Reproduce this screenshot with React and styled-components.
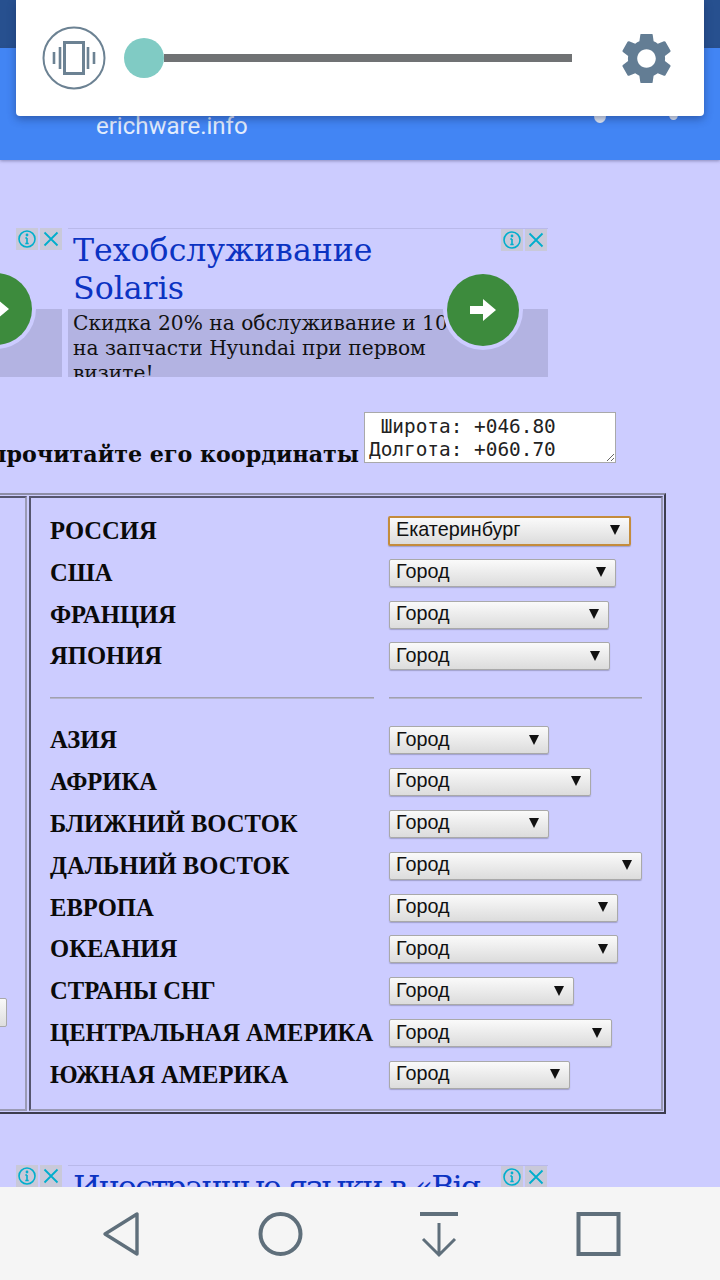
import React from "react";
import styled, { createGlobalStyle } from "styled-components";

const Global = createGlobalStyle`
  html, body { margin: 0; padding: 0; background: #ccccff; }
  * { box-sizing: border-box; }
`;

const Page = styled.div`
  position: relative;
  width: 720px;
  height: 1280px;
  overflow: hidden;
  background: #ccccff;
  font-family: "Liberation Serif", serif;
`;

const StatusBar = styled.div`
  height: 48px;
  background: #27508f;
`;

const AppBar = styled.header`
  position: relative;
  height: 112px;
  padding: 65px 0 0 96px;
  background: #4285f4;
  box-shadow: 0 1px 3px rgba(60, 60, 100, 0.45);
`;

const SiteName = styled.div`
  font: 24px/26px Roboto, sans-serif;
  color: #e3edfd;
`;

const Dot = styled.span`
  position: absolute;
  left: ${(p) => p.$x}px;
  top: ${(p) => p.$y}px;
  width: ${(p) => p.$s}px;
  height: ${(p) => p.$s + 2}px;
  border-radius: 50%;
  background: #e8edf6;
`;

const QuickPanel = styled.div`
  position: absolute;
  left: 16px;
  top: 0;
  width: 688px;
  height: 116px;
  display: flex;
  align-items: center;
  padding: 0 26px;
  background: #fff;
  border-radius: 0 0 4px 4px;
  box-shadow: 0 3px 8px rgba(20, 40, 90, 0.45);
`;

const VibrateIcon = styled.svg`
  width: 64px;
  height: 64px;
  flex: none;
`;

const Slider = styled.div`
  display: flex;
  align-items: center;
  margin-left: 18px;
  width: 448px;
  flex: none;
`;

const Knob = styled.div`
  width: 40px;
  height: 40px;
  border-radius: 50%;
  background: #80cbc4;
  flex: none;
`;

const Track = styled.div`
  flex: 1;
  height: 8px;
  background: #707274;
`;

const GearIcon = styled.svg`
  width: 49px;
  height: 49px;
  margin-left: 50px;
  flex: none;
`;

const AdRow = styled.section`
  display: flex;
  gap: 6px;
  height: ${(p) => p.$h}px;
  margin-top: ${(p) => p.$top}px;
  overflow: hidden;
`;

const AdStub = styled.div`
  position: relative;
  width: 62px;
  flex: none;
  display: flex;
  flex-direction: column;
  justify-content: flex-end;
  overflow: hidden;
`;

const Ad = styled.div`
  position: relative;
  width: 480px;
  flex: none;
  border-top: 1px solid #b9b9ea;
  display: flex;
  flex-direction: column;
`;

const AdTitle = styled.div`
  height: 80px;
  flex: none;
  padding: 2px 0 0 5px;
  font-family: "DejaVu Serif", serif;
  font-size: 31.6px;
  line-height: 38px;
  letter-spacing: ${(p) => p.$spacing || 0}px;
  color: #0b33c2;
  white-space: nowrap;
`;

const AdBody = styled.div`
  height: 68px;
  flex: none;
  overflow: hidden;
  padding: 2px 0 0 5px;
  background: #b3b3e2;
  font-family: "DejaVu Serif", serif;
  font-size: 20.2px;
  line-height: 25px;
  color: #111;
  white-space: nowrap;
`;

const StubShade = styled.div`
  height: 68px;
  background: #b3b3e2;
`;

const AdButtons = styled.div`
  position: absolute;
  right: ${(p) => p.$r}px;
  top: 0;
  display: flex;
  gap: 2px;
`;

const AdButton = styled.div`
  width: 22px;
  height: 22px;
  background: #c9c9d9;
  display: flex;
  align-items: center;
  justify-content: center;
`;

const GoButton = styled.div`
  position: absolute;
  left: ${(p) => p.$x - 40}px;
  top: ${(p) => p.$y - 40}px;
  width: 80px;
  height: 80px;
  border-radius: 50%;
  background: #ccccff;
  display: flex;
  align-items: center;
  justify-content: center;
`;

const GoInner = styled.div`
  width: 72px;
  height: 72px;
  border-radius: 50%;
  background: #3d8b3d;
  display: flex;
  align-items: center;
  justify-content: center;
`;

const CoordRow = styled.section`
  display: flex;
  justify-content: flex-end;
  align-items: flex-end;
  gap: 5px;
  margin-top: 35px;
  padding-right: 104px;
  height: 51px;
`;

const CoordLabel = styled.div`
  font-family: "DejaVu Serif", serif;
  font-size: 22.2px;
  font-weight: bold;
  line-height: 30px;
  color: #0a0a0a;
  white-space: nowrap;
  margin-bottom: -6px;
`;

const CoordBox = styled.textarea`
  width: 252px;
  height: 51px;
  flex: none;
  margin: 0;
  padding: 2px 4px 0;
  border: 1px solid #a9a9a9;
  border-radius: 0;
  background: #fff;
  font: 19.4px/23px "DejaVu Sans Mono", monospace;
  color: #222;
  white-space: pre;
  overflow: hidden;
  resize: both;
  outline: none;
`;

const Table = styled.section`
  display: flex;
  gap: 2px;
  width: 766px;
  height: 621px;
  margin: 30px 0 0 -100px;
  padding: 1px 1px 1px 0;
  border-top: 2px solid #8d8da6;
  border-right: 2px solid #3d3d4e;
  border-bottom: 2px solid #3d3d4e;
`;

const SideCell = styled.div`
  flex: 1;
  padding-top: 500px;
  border: 2px solid;
  border-color: #55556e #9a9ab4 #9a9ab4 #55556e;
`;

const SideStub = styled.div`
  width: 105px;
  height: 29px;
  border: 1px solid #a9a9a9;
  border-radius: 2px;
  background: linear-gradient(#f9f9f9, #dedede);
`;

const MainCell = styled.div`
  width: 634px;
  flex: none;
  padding: 12px 0 0 19px;
  border: 2px solid;
  border-color: #55556e #9a9ab4 #9a9ab4 #55556e;
  display: grid;
  grid-template-columns: 339px 1fr;
  grid-auto-rows: 41.85px;
  align-items: center;
  align-content: start;
`;

const Label = styled.div`
  font-size: 24.6px;
  font-weight: bold;
  line-height: 30px;
  color: #0a0a0a;
  white-space: nowrap;
`;

const Select = styled.div`
  width: ${(p) => p.$w}px;
  height: ${(p) => (p.$focus ? 30 : 28)}px;
  margin-left: ${(p) => (p.$focus ? -1 : 0)}px;
  display: flex;
  align-items: center;
  justify-content: space-between;
  padding: 0 9px 3px 6px;
  border: ${(p) => (p.$focus ? "2px solid #c48c3c" : "1px solid #a9a9a9")};
  border-radius: 2px;
  background: linear-gradient(#fafafa, #dcdcdc);
  box-shadow: 0 1px 1px rgba(80, 80, 110, 0.35);
  font: 19.8px/24px "Liberation Sans", sans-serif;
  color: #111;
`;

const Arrow = styled.span`
  width: 0;
  height: 0;
  border-left: 5px solid transparent;
  border-right: 5px solid transparent;
  border-top: 10px solid #111;
  margin-top: 2px;
`;

const Rule = styled.div`
  height: 2px;
  border-top: 1px solid #a0a0ae;
  border-bottom: 1px solid #b4b4cc;
  width: ${(p) => p.$w}px;
`;

const NavBar = styled.nav`
  position: absolute;
  left: 0;
  bottom: 0;
  width: 720px;
  height: 93px;
  display: flex;
  justify-content: center;
  padding-top: 23px;
  background: #f5f5f5;
`;

const NavItem = styled.div`
  width: 159px;
  height: 50px;
  display: flex;
  justify-content: center;
`;

const NavIcon = styled.svg`
  width: 50px;
  height: 50px;
  fill: none;
  stroke: #5f6f7b;
  stroke-width: 4;
`;

const InfoGlyph = () => (
  <svg width="20" height="20" viewBox="0 0 20 20" fill="none" stroke="#00aecd" strokeWidth="1.6">
    <circle cx="10" cy="10" r="8" />
    <path d="M10 9v5.5M8.3 9h1.7M8.3 14.5h3.4" />
    <circle cx="10" cy="6" r="0.6" fill="#00aecd" />
  </svg>
);
const CloseGlyph = () => (
  <svg width="20" height="20" viewBox="0 0 20 20" fill="none" stroke="#00aecd" strokeWidth="1.8">
    <path d="M3.5 3.5l13 13M16.5 3.5l-13 13" />
  </svg>
);
const Buttons = ({ r }) => (
  <AdButtons $r={r}>
    <AdButton><InfoGlyph /></AdButton>
    <AdButton><CloseGlyph /></AdButton>
  </AdButtons>
);
const Go = ({ x, y }) => (
  <GoButton $x={x} $y={y}>
    <GoInner>
      <svg width="28" height="24" viewBox="0 0 28 24" fill="#fff">
        <path d="M1 8h13V1l13 11-13 11v-7H1z" />
      </svg>
    </GoInner>
  </GoButton>
);

const TOP = [
  ["РОССИЯ", 243, "Екатеринбург", true],
  ["США", 227],
  ["ФРАНЦИЯ", 220],
  ["ЯПОНИЯ", 221],
];
const BOTTOM = [
  ["АЗИЯ", 160],
  ["АФРИКА", 202],
  ["БЛИЖНИЙ ВОСТОК", 160],
  ["ДАЛЬНИЙ ВОСТОК", 253],
  ["ЕВРОПА", 229],
  ["ОКЕАНИЯ", 229],
  ["СТРАНЫ СНГ", 185],
  ["ЦЕНТРАЛЬНАЯ АМЕРИКА", 223],
  ["ЮЖНАЯ АМЕРИКА", 181],
];

const Row = ({ item }) => (
  <>
    <Label>{item[0]}</Label>
    <Select $w={item[1]} $focus={item[3]}>
      {item[2] || "Город"}
      <Arrow />
    </Select>
  </>
);

export default function App() {
  return (
    <Page>
      <Global />
      <StatusBar />
      <AppBar>
        <SiteName>erichware.info</SiteName>
        <Dot $x={34} $y={60} $s={5} />
        <Dot $x={56} $y={60} $s={5} />
        <Dot $x={594} $y={61} $s={12} />
        <Dot $x={669} $y={61} $s={9} />
      </AppBar>
      <QuickPanel>
        <VibrateIcon viewBox="0 0 64 64" fill="none" stroke="#6c8293">
          <circle cx="32" cy="32" r="30.5" strokeWidth="2" />
          <rect x="22.5" y="16.5" width="19" height="31" strokeWidth="3" />
          <path d="M18 21v22M46 21v22" strokeWidth="2.6" />
          <path d="M12 26v12M52 26v12" strokeWidth="2.6" />
        </VibrateIcon>
        <Slider>
          <Knob />
          <Track />
        </Slider>
        <GearIcon viewBox="2.5 2.5 19 19" fill="#637d94">
          <path d="M19.14 12.94c.04-.3.06-.61.06-.94 0-.32-.02-.64-.07-.94l2.03-1.58c.18-.14.23-.41.12-.61l-1.92-3.32c-.12-.22-.37-.29-.59-.22l-2.39.96c-.5-.38-1.03-.7-1.62-.94l-.36-2.54c-.04-.24-.24-.41-.48-.41h-3.84c-.24 0-.43.17-.47.41l-.36 2.54c-.59.24-1.13.57-1.62.94l-2.39-.96c-.22-.08-.47 0-.59.22L2.74 8.87c-.12.21-.08.47.12.61l2.03 1.58c-.05.3-.09.63-.09.94s.02.64.07.94l-2.03 1.58c-.18.14-.23.41-.12.61l1.92 3.32c.12.22.37.29.59.22l2.39-.96c.5.38 1.03.7 1.62.94l.36 2.54c.05.24.24.41.48.41h3.84c.24 0 .44-.17.47-.41l.36-2.54c.59-.24 1.13-.56 1.62-.94l2.39.96c.22.08.47 0 .59-.22l1.92-3.32c.12-.22.07-.47-.12-.61l-2.01-1.58zM12 15.600c-1.980 0-3.600-1.620-3.600-3.600s1.620-3.600 3.600-3.600 3.600 1.620 3.600 3.600-1.620 3.600-3.600 3.600z" />
        </GearIcon>
      </QuickPanel>

      <AdRow $top={68} $h={149}>
        <AdStub>
          <StubShade />
          <Go x={-4} y={81} />
          <Buttons r={0} />
        </AdStub>
        <Ad>
          <AdTitle>
            Техобслуживание
            <br />
            Solaris
          </AdTitle>
          <AdBody>
            Скидка 20% на обслуживание и 10%
            <br />
            на запчасти Hyundai при первом
            <br />
            визите!
          </AdBody>
          <Go x={415} y={81} />
          <Buttons r={1} />
        </Ad>
      </AdRow>

      <CoordRow>
        <CoordLabel>прочитайте его координаты</CoordLabel>
        <CoordBox readOnly value={" Широта: +046.80\nДолгота: +060.70"} />
      </CoordRow>

      <Table>
        <SideCell>
          <SideStub />
        </SideCell>
        <MainCell>
          {TOP.map((item) => (
            <Row key={item[0]} item={item} />
          ))}
          <Rule $w={324} />
          <Rule $w={253} />
          {BOTTOM.map((item) => (
            <Row key={item[0]} item={item} />
          ))}
        </MainCell>
      </Table>

      <AdRow $top={51} $h={30}>
        <AdStub>
          <Buttons r={0} />
        </AdStub>
        <Ad>
          <AdTitle $spacing={-1.9}>Иностранные языки в «Big</AdTitle>
          <Buttons r={1} />
        </Ad>
      </AdRow>

      <NavBar>
        <NavItem>
          <NavIcon viewBox="0 0 50 50">
            <path d="M40 4v40L8 24z" strokeLinejoin="round" strokeWidth="3.4" />
          </NavIcon>
        </NavItem>
        <NavItem>
          <NavIcon viewBox="0 0 50 50">
            <circle cx="24.5" cy="24" r="20" />
          </NavIcon>
        </NavItem>
        <NavItem>
          <NavIcon viewBox="0 0 50 50">
            <path d="M5 4h38" />
            <path d="M24 13v32M8 29l16 16 16-16" strokeWidth="3" />
          </NavIcon>
        </NavItem>
        <NavItem>
          <NavIcon viewBox="0 0 50 50">
            <rect x="4.5" y="4" width="40" height="40" />
          </NavIcon>
        </NavItem>
      </NavBar>
    </Page>
  );
}
